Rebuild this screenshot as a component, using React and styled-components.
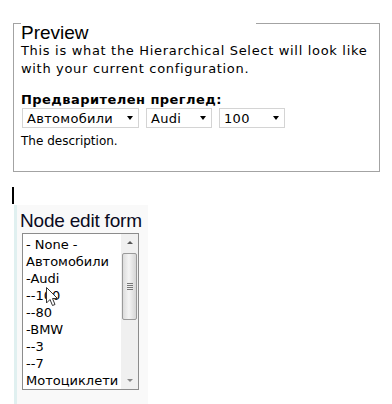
import React from "react";
import styled, { createGlobalStyle } from "styled-components";

const GlobalStyle = createGlobalStyle`
  body {
    margin: 0;
    background: #fff;
    font-family: "DejaVu Sans", Verdana, sans-serif;
    color: #000;
  }
`;

const Page = styled.div`
  padding-top: 23px;
  width: 392px;
  height: 381px;
  overflow: hidden;
`;

const PreviewBox = styled.section`
  margin-left: 13px;
  width: 365px;
  border: 1px solid #a3a3a3;
  border-top: none;
  height: 148px;
`;

const TopEdge = styled.div`
  display: flex;
  height: 1px;
`;

const EdgeLine = styled.div`
  border-top: 1px solid #a3a3a3;
  width: ${(p) => (p.$grow ? "auto" : `${p.$w}px`)};
  flex: ${(p) => (p.$grow ? 1 : "none")};
`;

const EdgeGap = styled.div`
  width: ${(p) => p.$w}px;
`;

const Inner = styled.div`
  padding-left: 7px;
`;

const Legend = styled.div`
  font-family: "Liberation Sans", Arial, sans-serif;
  font-size: 19px;
  line-height: 18px;
  color: #000;
`;

const Intro = styled.p`
  margin: 0;
  font-size: 13px;
  line-height: 18px;
  letter-spacing: 0.68px;
  width: 350px;
`;

const FieldLabel = styled.div`
  margin-top: 14px;
  font-size: 13px;
  font-weight: bold;
  line-height: 16px;
  letter-spacing: 0.45px;
`;

const SelectRow = styled.div`
  display: flex;
  gap: 7px;
  padding-left: 1px;
`;

const FakeSelect = styled.div`
  display: flex;
  align-items: center;
  justify-content: space-between;
  box-sizing: border-box;
  width: ${(p) => p.$w}px;
  height: 20px;
  border: 1px solid #d4d4d4;
  background: #fff;
  padding: 0 4px;
  font-size: 13px;
  letter-spacing: 0.3px;
`;

const Arrow = styled.span`
  width: 0;
  height: 0;
  border-left: 3.5px solid transparent;
  border-right: 3.5px solid transparent;
  border-top: 4px solid #000;
  margin-right: 1px;
`;

const Description = styled.div`
  margin-top: 5px;
  font-size: 12px;
  line-height: 16px;
`;

const Caret = styled.div`
  margin: 15px 0 0 12px;
  width: 2px;
  height: 17px;
  background: #000;
`;

const Panel = styled.section`
  margin-left: 14px;
  margin-top: 1px;
  width: 134px;
  height: 199px;
  box-sizing: border-box;
  border-left: 3px solid #e0f0f0;
  background: #f9f9f9;
  padding: 6px 0 0 3px;
`;

const PanelTitle = styled.h2`
  margin: 0;
  font-family: "Liberation Sans", Arial, sans-serif;
  font-weight: normal;
  font-size: 19px;
  line-height: 20px;
  color: #0a0a1e;
  letter-spacing: -0.2px;
`;

const ListBox = styled.div`
  position: relative;
  margin: 2px 0 0 2px;
  box-sizing: border-box;
  width: 117px;
  height: 157px;
  border: 1px solid #8c8c8c;
  background: #fff;
  display: flex;
`;

const Options = styled.ul`
  list-style: none;
  margin: 0;
  padding: 2px 0 0 3px;
  flex: 1;
  overflow: hidden;
  font-size: 13px;
  line-height: 17px;
  white-space: nowrap;
`;

const ScrollBar = styled.div`
  width: 17px;
  background: #f0f0f0;
  display: flex;
  flex-direction: column;
  align-items: center;
`;

const ScrollButton = styled.div`
  height: 17px;
  width: 17px;
  display: flex;
  align-items: center;
  justify-content: center;
`;

const ScrollArrow = styled.span`
  width: 0;
  height: 0;
  border-left: 3px solid transparent;
  border-right: 3px solid transparent;
  ${(p) =>
    p.$up
      ? "border-bottom: 3px solid #555;"
      : "border-top: 3px solid #888;"}
`;

const Thumb = styled.div`
  box-sizing: border-box;
  width: 15px;
  height: 67px;
  margin-top: 2px;
  border: 1px solid #9a9a9a;
  border-radius: 2px;
  background: linear-gradient(to right, #dcdcdc, #f4f4f4 45%, #d6d6d6);
  display: flex;
  flex-direction: column;
  align-items: center;
  justify-content: center;
  gap: 1px;
`;

const Grip = styled.span`
  width: 6px;
  height: 1px;
  background: #777;
`;

const TrackFill = styled.div`
  flex: 1;
`;

const Cursor = styled.svg`
  position: absolute;
  left: 23px;
  top: 53px;
`;

const options = [
  "- None -",
  "Автомобили",
  "-Audi",
  "--100",
  "--80",
  "-BMW",
  "--3",
  "--7",
  "Мотоциклети",
];

export default function App() {
  return (
    <Page>
      <GlobalStyle />
      <PreviewBox>
        <TopEdge>
          <EdgeLine $w={7} />
          <EdgeGap $w={235} />
          <EdgeLine $grow />
        </TopEdge>
        <Inner>
          <Legend>Preview</Legend>
          <Intro>
            This is what the Hierarchical Select will look like with your
            current configuration.
          </Intro>
          <FieldLabel>Предварителен преглед:</FieldLabel>
          <SelectRow>
            <FakeSelect $w={117}>
              Автомобили <Arrow />
            </FakeSelect>
            <FakeSelect $w={66}>
              Audi <Arrow />
            </FakeSelect>
            <FakeSelect $w={66}>
              100 <Arrow />
            </FakeSelect>
          </SelectRow>
          <Description>The description.</Description>
        </Inner>
      </PreviewBox>
      <Caret />
      <Panel>
        <PanelTitle>Node edit form</PanelTitle>
        <ListBox>
          <Options>
            {options.map((o) => (
              <li key={o}>{o}</li>
            ))}
          </Options>
          <ScrollBar>
            <ScrollButton>
              <ScrollArrow $up />
            </ScrollButton>
            <Thumb>
              <Grip />
              <Grip />
              <Grip />
              <Grip />
            </Thumb>
            <TrackFill />
            <ScrollButton>
              <ScrollArrow />
            </ScrollButton>
          </ScrollBar>
          <Cursor width="13" height="20" viewBox="0 0 13 20">
            <path
              d="M0.5 0.5 L0.5 16 L4 12.5 L6.5 18.5 L9 17.5 L6.5 11.5 L11.5 11.5 Z"
              fill="#fff"
              stroke="#333"
              strokeWidth="1"
              strokeLinejoin="round"
            />
          </Cursor>
        </ListBox>
      </Panel>
    </Page>
  );
}
